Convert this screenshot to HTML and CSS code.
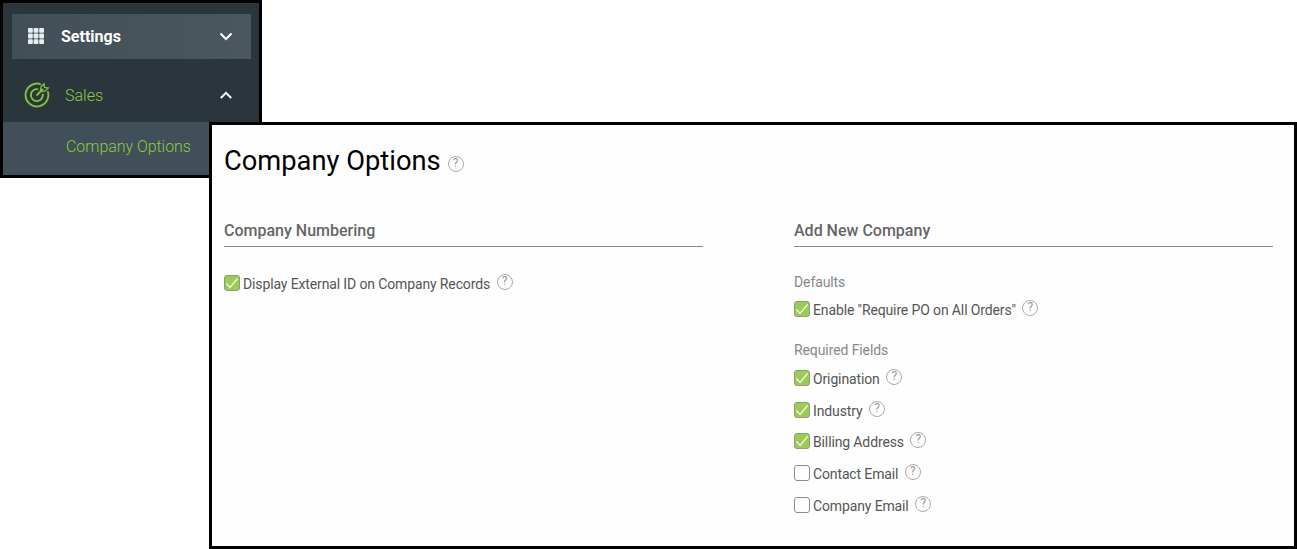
FILE: index.html
```html
<!DOCTYPE html>
<html lang="en">
<head>
<meta charset="utf-8">
<title>Company Options</title>
<link rel="stylesheet" href="styles.css">
</head>
<body>
<nav class="sidebar">
  <div class="nav-settings">
    <svg class="grid-icon" width="16" height="16" viewBox="0 0 16 16"><g fill="#e8edf0"><rect x="0" y="0" width="4.800" height="4.800" rx=".8"/><rect x="5.600" y="0" width="4.800" height="4.800" rx=".8"/><rect x="11.200" y="0" width="4.800" height="4.800" rx=".8"/><rect x="0" y="5.600" width="4.800" height="4.800" rx=".8"/><rect x="5.600" y="5.600" width="4.800" height="4.800" rx=".8"/><rect x="11.200" y="5.600" width="4.800" height="4.800" rx=".8"/><rect x="0" y="11.200" width="4.800" height="4.800" rx=".8"/><rect x="5.600" y="11.200" width="4.800" height="4.800" rx=".8"/><rect x="11.200" y="11.200" width="4.800" height="4.800" rx=".8"/></g></svg>
    <span class="nav-settings-label">Settings</span>
    <svg class="chev" width="14" height="9" viewBox="0 0 14 9"><path d="M1.500 1.500 7 7l5.500-5.500" fill="none" stroke="#fff" stroke-width="2"/></svg>
  </div>
  <div class="nav-sales">
    <svg class="target-icon" width="26" height="26" viewBox="0 0 26 26" fill="none" stroke="#82c03c" stroke-width="1.900"><path d="M16.800 2.300A11.400 11.400 0 1 0 23.700 9.200"/><path d="M14.300 7.300A6 6 0 1 0 18.700 11.700"/><path d="M12.500 13.500 19 7"/><path d="M16.500 8.500 17 4.500 20 1.800 20.500 5.500 24.300 6 21.500 9 17.500 9.500Z" stroke-width="1.300"/></svg>
    <span class="nav-sales-label">Sales</span>
    <svg class="chev" width="14" height="9" viewBox="0 0 14 9"><path d="M1.800 7 7 1.800 12.200 7" fill="none" stroke="#fff" stroke-width="2"/></svg>
  </div>
  <div class="nav-sub">Company Options</div>
</nav>

<main class="panel">
  <div class="title-row">
    <h1 class="title">Company Options</h1>
    <span class="help help-title">?</span>
  </div>
  <div class="columns">
    <section class="col">
      <h2 class="col-head">Company Numbering</h2>
      <div class="opt opt-first"><span class="box on"><svg width="16" height="14" viewBox="0 0 16 14"><path d="M1.500 7.500 5.800 12 14.500 1.800" fill="none" stroke="#fff" stroke-width="1.300"/></svg></span><span class="opt-label">Display External ID on Company Records</span><span class="help">?</span></div>
    </section>
    <section class="col">
      <h2 class="col-head">Add New Company</h2>
      <div class="group-label group-defaults">Defaults</div>
      <div class="opt opt-default"><span class="box on"><svg width="16" height="14" viewBox="0 0 16 14"><path d="M1.500 7.500 5.800 12 14.500 1.800" fill="none" stroke="#fff" stroke-width="1.300"/></svg></span><span class="opt-label">Enable "Require PO on All Orders"</span><span class="help">?</span></div>
      <div class="group-label group-required">Required Fields</div>
      <div class="opt-list">
        <div class="opt"><span class="box on"><svg width="16" height="14" viewBox="0 0 16 14"><path d="M1.500 7.500 5.800 12 14.500 1.800" fill="none" stroke="#fff" stroke-width="1.300"/></svg></span><span class="opt-label">Origination</span><span class="help">?</span></div>
        <div class="opt"><span class="box on"><svg width="16" height="14" viewBox="0 0 16 14"><path d="M1.500 7.500 5.800 12 14.500 1.800" fill="none" stroke="#fff" stroke-width="1.300"/></svg></span><span class="opt-label">Industry</span><span class="help">?</span></div>
        <div class="opt"><span class="box on"><svg width="16" height="14" viewBox="0 0 16 14"><path d="M1.500 7.500 5.800 12 14.500 1.800" fill="none" stroke="#fff" stroke-width="1.300"/></svg></span><span class="opt-label">Billing Address</span><span class="help">?</span></div>
        <div class="opt"><span class="box"></span><span class="opt-label">Contact Email</span><span class="help">?</span></div>
        <div class="opt"><span class="box"></span><span class="opt-label">Company Email</span><span class="help">?</span></div>
      </div>
    </section>
  </div>
</main>
</body>
</html>
```
FILE: styles.css
```css
* { box-sizing: border-box; }
html, body { margin: 0; height: 549px; overflow: hidden; background: #fff; }
body { position: relative; font-family: Roboto, "Liberation Sans", sans-serif; }

.sidebar {
  width: 262px;
  height: 178px;
  border: 3px solid #000;
  background: #2b363c;
  padding-top: 11px;
  display: flex;
  flex-direction: column;
}
.nav-settings {
  margin-left: 9px;
  width: 239px;
  height: 45px;
  background: linear-gradient(90deg, #434f56, #4b575e);
  display: flex;
  align-items: center;
  padding: 0 18px 0 16px;
}
.nav-settings-label {
  margin-left: 17px;
  font-size: 16px;
  font-weight: 700;
  color: #fff;
  flex: 1;
}
.grid-icon { margin-top: -2px; }
.target-icon { margin-top: -2px; }
.nav-sales {
  height: 63px;
  display: flex;
  align-items: center;
  padding: 10px 26px 0 21px;
}
.nav-sales-label {
  margin-left: 15px;
  flex: 1;
  font-size: 16px;
  font-weight: 300;
  color: #8ccb42;
}
.nav-sub {
  flex: 1;
  background: #414f58;
  padding: 15px 0 0 63px;
  font-size: 16px;
  font-weight: 300;
  letter-spacing: -0.050px;
  line-height: 20px;
  color: #8ccb42;
}

.panel {
  position: absolute;
  left: 209px;
  top: 122px;
  width: 1088px;
  height: 427px;
  border: 3px solid #000;
  background: #fefefe;
  padding: 21px 21px 0 12px;
}
.title-row { display: flex; align-items: center; height: 30px; }
.title { margin: 0; font-size: 27.300px; font-weight: 400; line-height: 30px; color: #000; }
.columns { display: flex; justify-content: space-between; margin-top: 29px; }
.col { width: 479px; }
.col-head {
  margin: 0;
  height: 42px;
  padding-top: 16px;
  border-bottom: 1px solid #8a8a8a;
  font-size: 16px;
  font-weight: 500;
  line-height: 20px;
  color: #666;
}
.group-label { font-size: 14px; letter-spacing: -0.100px; line-height: 18px; color: #888; }
.group-defaults { margin-top: 26px; }
.group-required { margin-top: 22px; }
.opt {
  display: flex;
  align-items: center;
  height: 20px;
  font-size: 14px;
  letter-spacing: -0.130px;
  color: #555;
}
.opt-first { margin-top: 26px; }
.opt-default { margin-top: 8px; }
.opt-list { display: flex; flex-direction: column; gap: 11.700px; margin-top: 9px; }
.opt-label { margin-left: 3px; line-height: 20px; padding-top: 2px; }
.box {
  width: 16px;
  height: 16px;
  border: 1.200px solid #8a8a8a;
  border-radius: 3px;
  background: #fff;
  display: flex;
  align-items: center;
  justify-content: center;
  flex: none;
}
.box.on { background: #9ccc54; border-color: #8e9c82; }
.help {
  width: 16px;
  height: 16px;
  margin-left: 6.500px;
  margin-top: -2px;
  border: 1.500px solid #aaa;
  border-radius: 50%;
  font-size: 12px;
  line-height: 13px;
  text-align: center;
  color: #999;
  flex: none;
}
.help-title { margin-left: 7px; margin-top: 5px; }
```
